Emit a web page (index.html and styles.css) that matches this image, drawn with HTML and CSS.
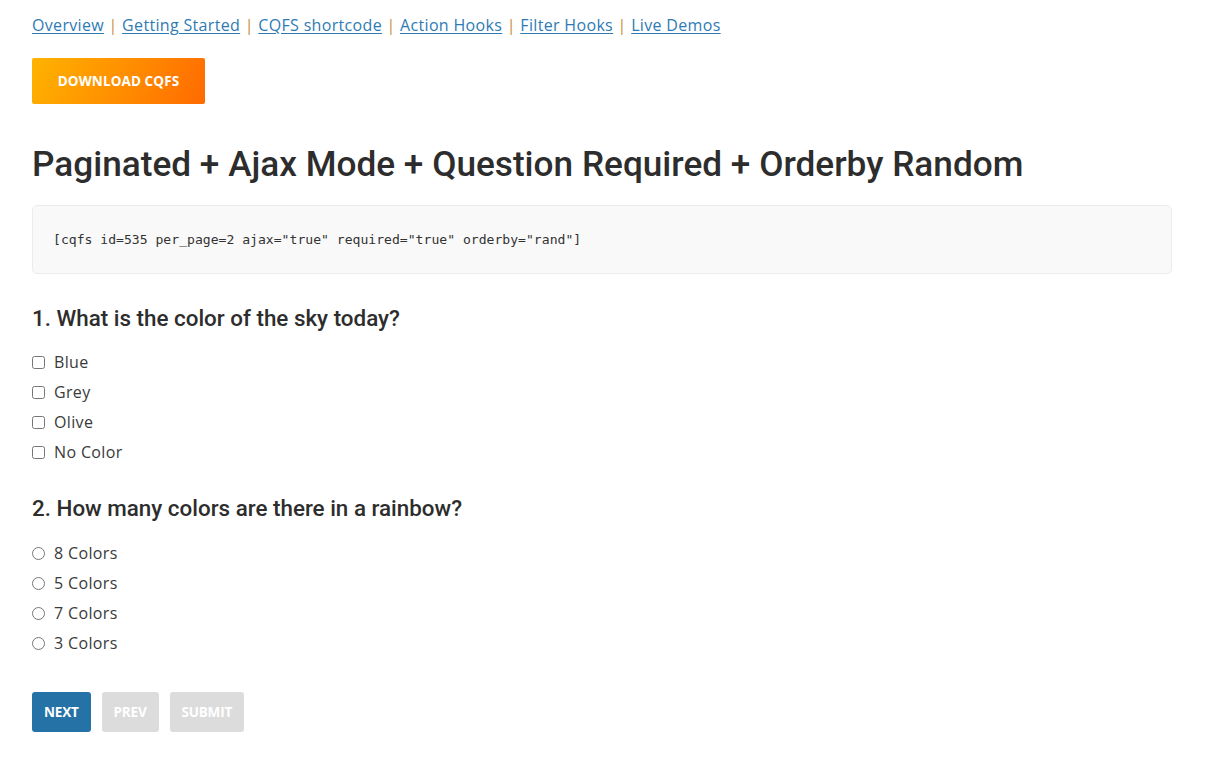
FILE: index.html
```html
<!DOCTYPE html>
<html>
<head>
<meta charset="utf-8">
<link rel="stylesheet" href="styles.css">
</head>
<body>
<div class="page">
  <nav class="links">
    <a href="#">Overview</a><span class="sep"> | </span><a href="#">Getting Started</a><span class="sep"> | </span><a href="#">CQFS shortcode</a><span class="sep"> | </span><a href="#">Action Hooks</a><span class="sep"> | </span><a href="#">Filter Hooks</a><span class="sep"> | </span><a href="#">Live Demos</a>
  </nav>
  <a class="download" href="#">DOWNLOAD CQFS</a>
  <h1 class="title">Paginated + Ajax Mode + Question Required + Orderby Random</h1>
  <pre class="code">[cqfs id=535 per_page=2 ajax="true" required="true" orderby="rand"]</pre>

  <h3 class="question q1">1. What is the color of the sky today?</h3>
  <div class="options o1">
    <label class="option"><input type="checkbox"><span>Blue</span></label>
    <label class="option"><input type="checkbox"><span>Grey</span></label>
    <label class="option"><input type="checkbox"><span>Olive</span></label>
    <label class="option"><input type="checkbox"><span>No Color</span></label>
  </div>

  <h3 class="question q2">2. How many colors are there in a rainbow?</h3>
  <div class="options o2">
    <label class="option"><input type="radio" name="r"><span>8 Colors</span></label>
    <label class="option"><input type="radio" name="r"><span>5 Colors</span></label>
    <label class="option"><input type="radio" name="r"><span>7 Colors</span></label>
    <label class="option"><input type="radio" name="r"><span>3 Colors</span></label>
  </div>

  <div class="actions">
    <button class="btn btn-next">NEXT</button>
    <button class="btn btn-off">PREV</button>
    <button class="btn btn-off">SUBMIT</button>
  </div>
</div>
</body>
</html>
```

FILE: styles.css
```css
html, body {
  margin: 0;
  background: #fff;
}
body {
  font-family: "Open Sans", "Noto Sans", sans-serif;
  color: #3a3a3a;
}
.page {
  width: 1140px;
  padding: 13px 0 0 32px;
}
.links {
  font-size: 16px;
  line-height: 24px;
  height: 24px;
  letter-spacing: 0.33px;
}
.links a {
  color: #2e7bb4;
  text-decoration: underline;
  text-underline-offset: 2px;
}
.links .sep {
  color: #c98a3b;
}
.download {
  display: flex;
  align-items: center;
  justify-content: center;
  margin-top: 21px;
  width: 173px;
  height: 46px;
  box-sizing: border-box;
  border-radius: 2px;
  background: linear-gradient(115deg, #ffb300 0%, #ff8c00 55%, #ff6a00 100%);
  color: #fff;
  font-size: 13.5px;
  font-weight: 700;
  letter-spacing: 0.1px;
  text-decoration: none;
}
.title {
  font-family: Roboto, sans-serif;
  font-weight: 500;
  font-size: 35.2px;
  line-height: 43px;
  color: #2d2d2d;
  margin: 39px 0 0;
}
.code {
  margin: 19px 0 0;
  border: 1px solid #ececec;
  border-radius: 5px;
  background: #f9f9f9;
  padding: 24px 20px 23px;
  font-family: "DejaVu Sans Mono", monospace;
  font-size: 13.1px;
  line-height: 20px;
  color: #333;
}
.question {
  font-family: Roboto, sans-serif;
  font-weight: 500;
  font-size: 22.4px;
  line-height: 26px;
  color: #2d2d2d;
  margin: 0;
}
.q1 { margin-top: 31px; }
.q2 { margin-top: 28px; }
.options {
  display: flex;
  flex-direction: column;
}
.o1 { margin-top: 16px; }
.o2 { margin-top: 17px; }
.option {
  display: flex;
  align-items: center;
  gap: 9px;
  height: 30px;
  font-size: 16px;
  letter-spacing: 0.35px;
  color: #3a3a3a;
}
.option input {
  margin: 0;
  width: 13px;
  height: 13px;
}
.actions {
  display: flex;
  gap: 11px;
  margin-top: 34px;
}
.btn {
  border: none;
  border-radius: 3px;
  height: 40px;
  padding: 0 12px;
  font-family: "Open Sans", sans-serif;
  font-size: 13.5px;
  font-weight: 700;
  letter-spacing: -0.2px;
  color: #fff;
}
.btn-next { background: #2573a6; }
.btn-off { background: #dcdcdc; }
```
